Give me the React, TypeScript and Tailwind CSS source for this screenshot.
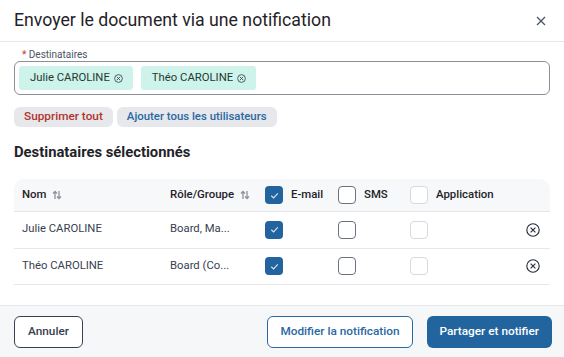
import React from "react";

const SortIcon = () => (
  <svg width="10" height="10" viewBox="0 0 10 10" className="ml-1.5" fill="none" stroke="#8b929c" strokeWidth="1.3">
    <path d="M3 9V1.5M1 3.5L3 1.5L5 3.5" />
    <path d="M7 1V8.5M5 6.5L7 8.5L9 6.5" />
  </svg>
);

const ChipX = () => (
  <svg width="9" height="9" viewBox="0 0 10 10" fill="none" stroke="#374151" strokeWidth="0.9" className="ml-[4px]">
    <circle cx="5" cy="5" r="4.3" />
    <path d="M3.1 3.1L6.9 6.9M6.9 3.1L3.1 6.9" />
  </svg>
);

const RemoveIcon = () => (
  <svg width="14" height="14" viewBox="0 0 14 14" fill="none" stroke="#1f2937" strokeWidth="1.1">
    <circle cx="7" cy="7" r="6.2" />
    <path d="M4.6 4.6L9.4 9.4M9.4 4.6L4.6 9.4" />
  </svg>
);

const Check = ({ state }: { state: "on" | "off" | "disabled" }) => {
  if (state === "on")
    return (
      <div className="w-[18px] h-[18px] rounded-[4px] bg-[#22649e] flex items-center justify-center">
        <svg width="11" height="11" viewBox="0 0 12 12" fill="none" stroke="#dbe6f0" strokeWidth="1.2">
          <path d="M2.5 6.3L5 8.6L9.6 3.6" />
        </svg>
      </div>
    );
  return (
    <div
      className={
        "w-[18px] h-[18px] rounded-[4px] border bg-white " +
        (state === "off" ? "border-[#6b7280]" : "border-[#d6d9de]")
      }
    />
  );
};

const rows = [
  { name: "Julie CAROLINE", role: "Board, Ma..." },
  { name: "Théo CAROLINE", role: "Board (Co..." },
];

export default function App() {
  return (
    <div
      className="w-[564px] h-[357px] bg-white flex flex-col text-[#1f2937] overflow-hidden"
      style={{ fontFamily: "Roboto, 'Liberation Sans', sans-serif" }}
    >
      <div className="h-[42px] flex items-center justify-between pl-[14px] pr-[18px] border-b border-[#e5e7eb] shrink-0">
        <div className="text-[17.7px] text-[#1f2328]">Envoyer le document via une notification</div>
        <svg width="10" height="10" viewBox="0 0 10 10" stroke="#4b5563" strokeWidth="1.3">
          <path d="M1 1L9 9M9 1L1 9" />
        </svg>
      </div>

      <div className="flex-1 px-[14px] pt-[7px]">
        <div className="text-[10px] leading-[12px] text-[#4b5563] pl-[8px]">
          <span className="text-[#c0392b]">*</span> Destinataires
        </div>
        <div className="h-[34px] border border-[#8a9099] rounded-[6px] flex items-center gap-[8px] px-[4px]">
          <div className="h-[24px] pl-[11px] pr-[10px] rounded-[3px] bg-[#cdf3ea] flex items-center text-[11.3px] text-[#1f3a33]">
            Julie CAROLINE
            <ChipX />
          </div>
          <div className="h-[24px] pl-[11px] pr-[10px] rounded-[3px] bg-[#cdf3ea] flex items-center text-[11.3px] text-[#1f3a33]">
            Théo CAROLINE
            <ChipX />
          </div>
        </div>
        <div className="mt-[12px] flex gap-[4px]">
          <div className="h-[20px] px-[10px] rounded-[6px] bg-[#e6e8eb] flex items-center text-[11.8px] font-medium text-[#b3332b]">
            Supprimer tout
          </div>
          <div className="h-[20px] px-[10px] rounded-[6px] bg-[#e6e8eb] flex items-center text-[11.4px] font-medium text-[#2a67a3]">
            Ajouter tous les utilisateurs
          </div>
        </div>
        <div className="mt-[15px] text-[14.8px] font-bold text-[#1f2328] leading-[20px]">
          Destinataires sélectionnés
        </div>
        <div className="mt-[17px]">
          <div className="h-[33px] bg-[#f7f8fa] rounded-t-[10px] border-b border-[#e5e7eb] grid grid-cols-[148px_95px_73px_72px_1fr_37px] items-center pl-[8px] text-[11.4px] font-medium text-[#1f2328]">
            <div className="flex items-center">Nom<SortIcon /></div>
            <div className="flex items-center">Rôle/Groupe<SortIcon /></div>
            <div className="flex items-center gap-[8px]"><Check state="on" />E-mail</div>
            <div className="flex items-center gap-[8px]"><Check state="off" />SMS</div>
            <div className="flex items-center gap-[8px]"><Check state="disabled" />Application</div>
            <div />
          </div>
          {rows.map((r) => (
            <div
              key={r.name}
              className="h-[36.5px] border-b border-[#e5e7eb] grid grid-cols-[148px_95px_73px_72px_1fr_37px] items-center pl-[8px] text-[11.3px] text-[#374151]"
            >
              <div>{r.name}</div>
              <div>{r.role}</div>
              <div><Check state="on" /></div>
              <div><Check state="off" /></div>
              <div><Check state="disabled" /></div>
              <div className="flex justify-end pr-[10px]"><RemoveIcon /></div>
            </div>
          ))}
        </div>
      </div>

      <div className="h-[52px] shrink-0 bg-[#f6f7f9] border-t border-[#e5e7eb] flex items-center justify-between pl-[14px] pr-[12px]">
        <div className="h-[32px] px-[13px] rounded-[6px] border border-[#374151] bg-white flex items-center text-[11.8px] font-medium text-[#374151]">
          Annuler
        </div>
        <div className="flex gap-[14px]">
          <div className="h-[32px] px-[12px] rounded-[6px] border border-[#2a67a3] bg-white flex items-center text-[11.8px] font-medium text-[#2a67a3]">
            Modifier la notification
          </div>
          <div className="h-[32px] px-[13px] rounded-[6px] bg-[#22649e] flex items-center text-[11.8px] font-medium text-white">
            Partager et notifier
          </div>
        </div>
      </div>
    </div>
  );
}
